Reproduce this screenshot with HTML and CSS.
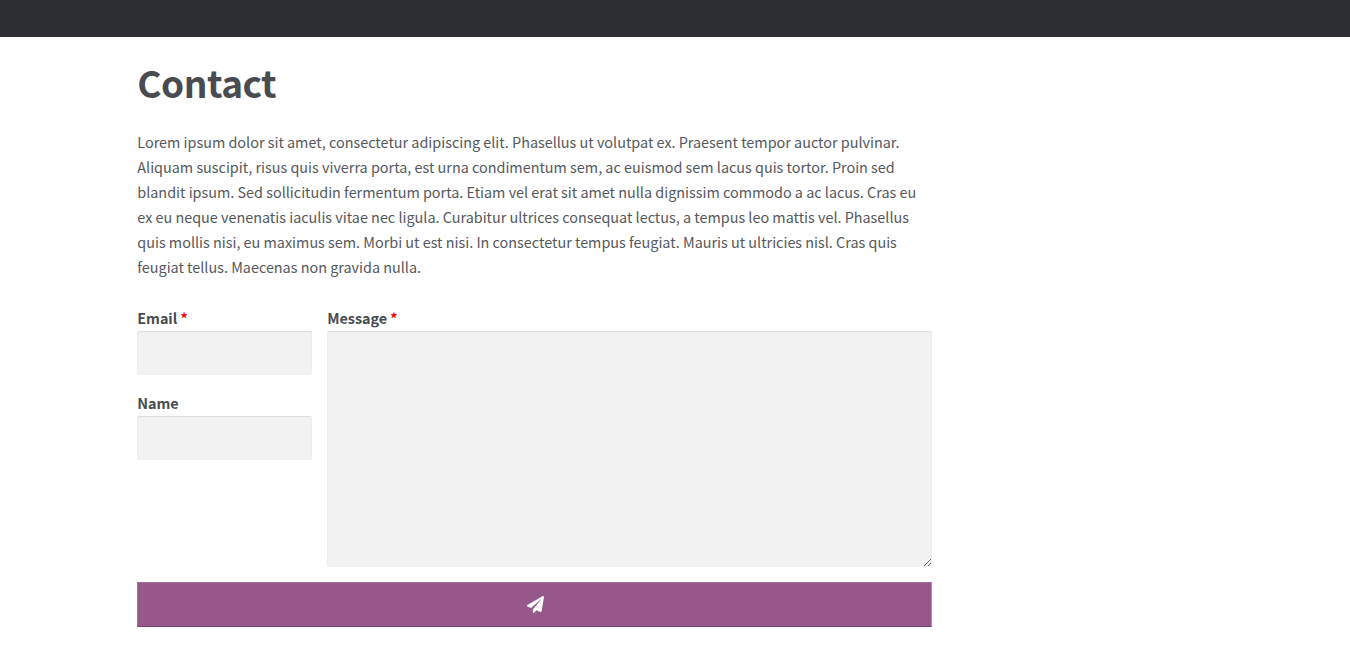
FILE: index.html
```html
<!DOCTYPE html>
<html lang="en">
<head>
<meta charset="utf-8">
<title>Contact</title>
<link rel="stylesheet" href="styles.css">
</head>
<body>
<header class="topbar"></header>
<main class="content">
  <h1 class="title">Contact</h1>
  <p class="intro">Lorem ipsum dolor sit amet, consectetur adipiscing elit. Phasellus ut volutpat ex. Praesent tempor auctor pulvinar.<br>
  Aliquam suscipit, risus quis viverra porta, est urna condimentum sem, ac euismod sem lacus quis tortor. Proin sed<br>
  blandit ipsum. Sed sollicitudin fermentum porta. Etiam vel erat sit amet nulla dignissim commodo a ac lacus. Cras eu<br>
  ex eu neque venenatis iaculis vitae nec ligula. Curabitur ultrices consequat lectus, a tempus leo mattis vel. Phasellus<br>
  quis mollis nisi, eu maximus sem. Morbi ut est nisi. In consectetur tempus feugiat. Mauris ut ultricies nisl. Cras quis<br>
  feugiat tellus. Maecenas non gravida nulla.</p>
  <form class="form">
    <div class="fields">
      <div class="side">
        <div class="field">
          <label class="label" for="email">Email <span class="required">*</span></label>
          <input class="control" id="email" type="email">
        </div>
        <div class="field">
          <label class="label" for="name">Name</label>
          <input class="control" id="name" type="text">
        </div>
      </div>
      <div class="field">
        <label class="label" for="message">Message <span class="required">*</span></label>
        <textarea class="control message" id="message"></textarea>
      </div>
    </div>
    <button class="send" type="button" aria-label="Send">
      <svg class="plane" viewBox="0 0 512 512"><path fill="currentColor" d="M476 3.2L12.500 270.600c-18.100 10.400-15.800 35.600 2.200 43.200L121 358.400l287.300-253.200c5.500-4.900 13.300 2.600 8.600 8.300L176 407v80.500c0 23.600 28.500 32.900 42.500 15.800L282 426l124.600 52.200c14.200 6 30.400-2.900 33-18.200l72-432C515 7.800 493.300-6.800 476 3.200z"/></svg>
    </button>
  </form>
</main>
</body>
</html>
```
FILE: styles.css
```css
* { box-sizing: border-box; }
body {
  margin: 0;
  background: #fff;
  color: #55585d;
  font-family: "Noto Sans CJK SC", "Noto Sans", sans-serif;
  font-size: 14.4px;
  line-height: 25px;
}
.topbar { height: 37px; background: #2c2d33; }
.content { width: 795px; margin-left: 137.3px; padding-top: 21px; }
.title {
  margin: 0;
  font-size: 37px;
  line-height: 48px;
  font-weight: 700;
  letter-spacing: -.5px;
  color: #484c51;
}
.intro { margin: 23px 0 26px; white-space: nowrap; letter-spacing: -.003px; }
.form { margin: 0; }
.fields { display: grid; grid-template-columns: 175px 1fr; column-gap: 15px; }
.side { display: flex; flex-direction: column; gap: 15px; }
.field { display: flex; flex-direction: column; }
.label { height: 26px; line-height: 25px; font-weight: 700; letter-spacing: -.05px; color: #484c51; }
.required { color: #f00; }
.control {
  width: 100%;
  height: 44px;
  margin: 0;
  padding: 10px;
  border: 0;
  border-radius: 2px;
  outline: 0;
  background: #f2f2f2;
  box-shadow: inset 0 1px 1px rgba(0, 0, 0, .08), inset 0 0 0 1px rgba(0, 0, 0, .01);
  font: inherit;
}
.message { height: 236px; resize: vertical; }
.send {
  display: flex;
  align-items: center;
  justify-content: center;
  width: 100%;
  height: 45px;
  margin-top: 15px;
  padding: 0;
  border: 1px solid;
  border-color: #a06b98 #b58bb0 #70426a #a574a0;
  background: #96588a;
  color: #fff;
}
.plane { width: 17px; height: 17px; margin: 0 0 1px 1px; }
```
